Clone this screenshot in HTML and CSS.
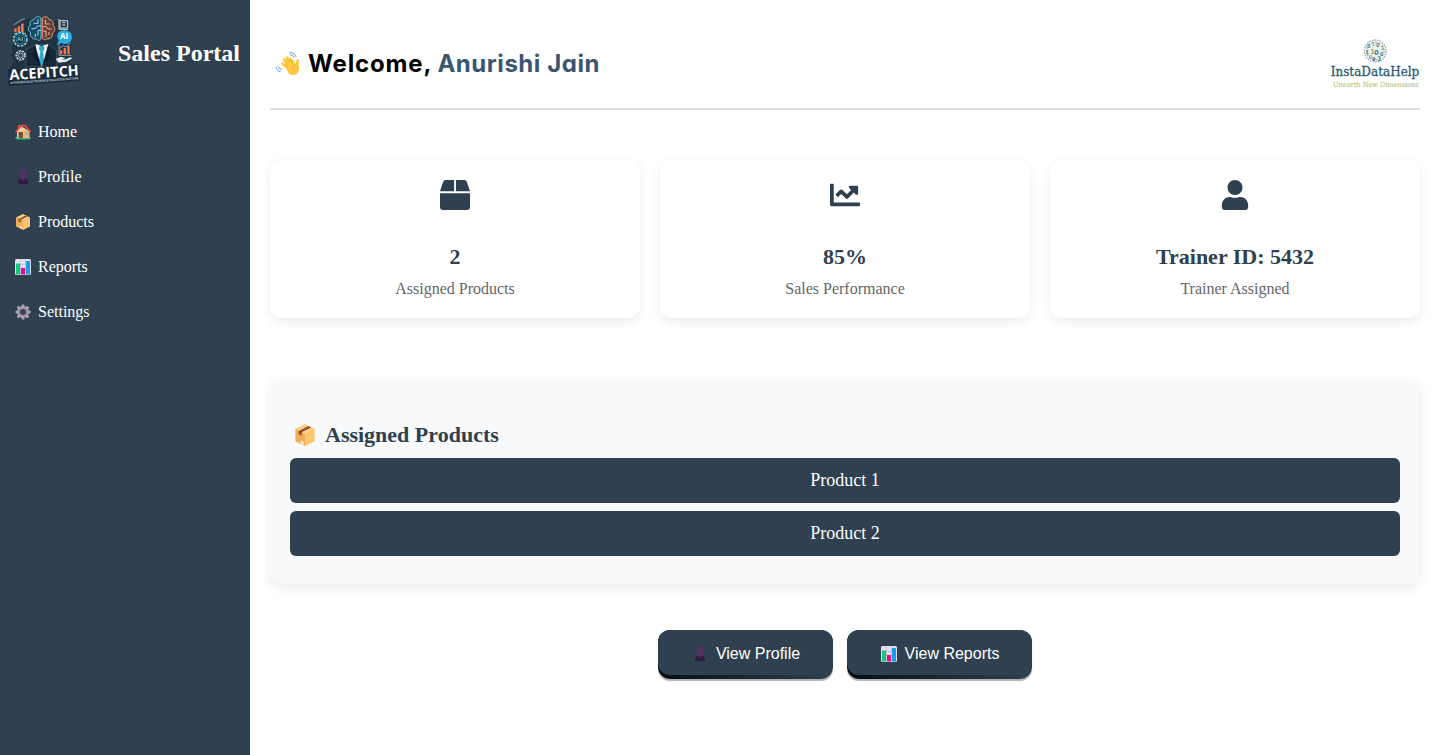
FILE: index.html
```html
<!DOCTYPE html>
<html lang="en">
<head>
<meta charset="utf-8">
<title>Sales Portal</title>
<link rel="stylesheet" href="styles.css">
</head>
<body>
<svg class="sprite" width="0" height="0" aria-hidden="true">
  <symbol id="house" viewBox="0 0 32 32">
    <path fill="#2fb879" d="M1 26h30q1 5-2 5H3q-3 0-2-5z"/>
    <path fill="#e54b35" d="M6 2h5v10H6z"/>
    <path fill="#f3d0a2" d="M4 15 13 5l15 9v14H4z"/>
    <path fill="#f0b477" d="M17 14h12v14H17z"/>
    <path fill="#824b35" d="M7 16h9v12H7z"/>
    <path fill="#9cb9ae" d="M20 17h6v6h-6z"/>
    <path fill="none" stroke="#ef4b3e" stroke-width="3.500" stroke-linecap="round" stroke-linejoin="round" d="M2 15 13 3h7l10 12"/>
  </symbol>
  <symbol id="bust" viewBox="0 0 32 32">
    <path fill="#321a40" d="M6 30v-4q0-6 6-7h8q6 1 6 7v4z"/>
    <path fill="#533163" d="M9 8q0-7 7-7t7 7v6q0 4-4 6l-3 4-3-4q-4-2-4-6z"/>
  </symbol>
  <symbol id="box" viewBox="0 0 32 32">
    <path fill="#ffcf82" d="M16 0 30 7 16 14 2 7z"/>
    <path fill="#f1ad56" d="M2 7 16 14v18L2 25z"/>
    <path fill="#ffc56f" d="M30 7 16 14v18l14-7z"/>
    <path fill="#8b5136" d="m7 10 14-7 4 2-14 7v5l-4-2z"/>
    <path fill="#fff0dc" d="m10 24 4 2v4l-4-2z"/>
  </symbol>
  <symbol id="chart" viewBox="0 0 32 32">
    <rect width="32" height="32" rx="3" fill="#e6dff0"/>
    <path stroke="#c2b5d4" stroke-width="1.5" d="M1 11h30M1 21h30M11 1v30M21 1v30"/>
    <path fill="#14c879" d="M2 9h8v22H2z"/>
    <path fill="#e80a8b" d="M12 18h8v13h-8z"/>
    <path fill="#149fe7" d="M22 4h8v27h-8z"/>
  </symbol>
  <symbol id="gear" viewBox="0 0 32 32">
    <g stroke="#aaa0b5" stroke-width="7" stroke-linecap="round">
      <path d="M16 4v24M4 16h24M7.500 7.500l17 17M7.500 24.500l17-17"/>
    </g>
    <circle cx="16" cy="16" r="11" fill="#aaa0b5"/>
    <circle cx="16" cy="16" r="7.500" fill="#766c80"/>
    <circle cx="16" cy="16" r="5" fill="#2f4050"/>
  </symbol>
  <symbol id="wave" viewBox="0 0 75 75">
    <g fill="none" stroke="#ffc83d" stroke-linecap="round">
      <path stroke-width="8" d="m31 46-8-8M38 39 27 25M47 36 36 20M56 36 47 24"/>
      <path stroke-width="8" d="m65 45 3-16"/>
    </g>
    <path fill="#ffc83d" d="m27 42 27-14 8 12 10 2q1 12-2 20c-5 13-22 13-29 4z"/>
    <path fill="none" stroke="#eda221" stroke-width="2" d="m33 40-6-10m14 6-7-12m16 9-7-10M53 55q0-9 9-14"/>
    <g fill="none" stroke="#4d8ad0" stroke-width="2.500" stroke-linecap="round">
      <path d="M46 11q8-1 11 8M44 5q14-2 19 12M10 47q2 9 10 8M3 48q2 13 13 14"/>
    </g>
  </symbol>
</svg>

<div class="app">
  <aside class="sidebar">
    <header class="brand">
      <svg class="brand-logo" viewBox="0 0 270 240" role="img" aria-label="AcePitch">
        <path class="halo" d="M44 53 76 30l22-3 20-5 28 4 16 9 44-7 2 34 5 42-4 55 23 8 2 42-208 18 2-44 10-20 6-9-8-17z"/>
        <g fill="#ef7646"><path d="m43 55 7-1v12h-7zm10-6 7-1v18h-7zm10-7 8-2v26h-8z"/></g>
        <path fill="none" stroke="#c0cdd7" stroke-width="2" d="m42 44 21-14 11-4M42 70h36"/>
        <g fill="none" stroke-width="3" transform="translate(0 4)">
          <path stroke="#70bedb" fill="#174a65" d="M123 20c-10-8-19-2-21 5-10 0-14 8-11 16-8 7-8 17 0 22-1 14 8 22 18 20 6 7 14 4 14-2z"/>
          <path stroke="#ee9873" fill="#613f3d" d="M127 20c10-8 20-1 21 6 10 0 14 9 11 16 8 7 7 17-1 23 0 14-9 19-17 17-6 6-14 3-14-3z"/>
          <path stroke="#a4dff0" d="M114 24v12h-13m22 8h-11l-6 8H94m29 5h-9v16m-8-6v10"/>
          <path stroke="#ffb18a" d="M136 25v13h13m-21 8h12l4 7h12m-28 6h10v18m9-15v9"/>
        </g>
        <g fill="none" stroke="#d7e1e7" stroke-width="3"><path d="M180 32h23v22h-23zM186 38h11m-11 7h11M177 27v31h28"/></g>
        <circle cx="61" cy="88" r="20" fill="#213d50" stroke="#8bcbe2" stroke-width="5" stroke-dasharray="8 3"/>
        <circle cx="61" cy="88" r="13" fill="#182c3d" stroke="#3faed2" stroke-width="2"/>
        <text x="52" y="94" class="badge-small">AI</text>
        <circle cx="62" cy="136" r="13" fill="none" stroke="#c7d4db" stroke-width="6" stroke-dasharray="6 3"/>
        <circle cx="62" cy="136" r="7" fill="#294154" stroke="#a6bac6" stroke-width="3"/>
        <path fill="#28ace2" d="M176 66q17-10 34 0 12 14 1 30-14 11-27 3l-14 7 6-14q-9-14 0-26z"/>
        <text x="180" y="86" class="badge">AI</text>
        <path fill="#16283a" stroke="#456073" stroke-width="2" d="m79 117 27-12 18-2 22 2 24 15v50H77z"/>
        <path fill="#ecf4f6" d="m106 102 19 6 20-6-6 34-14 34-16-34z"/>
        <path fill="#35a8ce" d="M119 108h12l3 8-5 8 4 32-8 14-9-14 5-32-5-8z"/>
        <path fill="#0d1c2b" d="m105 103 18 65-27-34 7-5zm40 0-18 65 27-34-7-5z"/>
        <g fill="#ef754b"><path d="M180 121h7v12h-7zm11-7h7v19h-7zm11-6h7v25h-7z"/></g>
        <path fill="none" stroke="#cbd7de" stroke-width="2" d="M177 104v32h37M180 115l10-8 7 4 15-12"/>
        <path fill="#e6edf0" d="m167 147 14-6 15 2-9 6 10-1 14-6 6 3-18 10-23 3z"/>
        <g transform="rotate(-4 133 200)">
          <path fill="#1b2c3b" d="M26 170h213v50H26z"/>
          <text x="29" y="203" textLength="208" lengthAdjust="spacingAndGlyphs" class="brand-name">ACEPITCH</text>
          <text x="30" y="215" textLength="205" lengthAdjust="spacingAndGlyphs" class="brand-tag">AI POWERED SALES TRAINING &amp; EVALUATION PLATFORM</text>
        </g>
      </svg>
      <h2 class="brand-title">Sales Portal</h2>
    </header>
    <nav class="menu">
      <a class="menu-item"><svg><use href="#house"/></svg>Home</a>
      <a class="menu-item"><svg><use href="#bust"/></svg>Profile</a>
      <a class="menu-item"><svg><use href="#box"/></svg>Products</a>
      <a class="menu-item"><svg><use href="#chart"/></svg>Reports</a>
      <a class="menu-item"><svg><use href="#gear"/></svg>Settings</a>
    </nav>
  </aside>

  <main class="content">
    <header class="topbar">
      <h1 class="welcome"><svg><use href="#wave"/></svg><span class="greeting">Welcome,</span><span class="user">Anurishi Jain</span></h1>
      <svg class="company" viewBox="0 0 330 195" role="img" aria-label="InstaDataHelp">
        <circle cx="166" cy="63" r="34" fill="#edf3f5"/>
        <circle cx="166" cy="63" r="33" fill="none" stroke="#8fa7b7" stroke-width="4" stroke-dasharray="4 4"/>
        <circle cx="166" cy="63" r="26" fill="none" stroke="#a3b994" stroke-width="4" stroke-dasharray="6 5"/>
        <g class="digits">
          <text x="142" y="54" fill="#587992">0</text><text x="155" y="48" fill="#8ba550">1</text><text x="169" y="51" fill="#47758f">0</text><text x="183" y="61" fill="#90a652">1</text>
          <text x="137" y="73" fill="#536d85">1</text><text x="180" y="79" fill="#426f95">0</text><text x="147" y="87" fill="#8098a4">0</text>
          <text x="151" y="73" class="big" fill="#8faf3c">1</text><text x="163" y="74" class="big" fill="#356d8f">0</text><text x="171" y="93" class="big" fill="#3d99cb">1</text><text x="157" y="94" fill="#315b86">9</text>
        </g>
        <text x="32" y="138" textLength="266" lengthAdjust="spacingAndGlyphs" class="company-name">InstaDataHelp</text>
        <text x="39" y="170" textLength="257" lengthAdjust="spacingAndGlyphs" class="company-tag">Unearth New Dimensions</text>
      </svg>
    </header>

    <section class="stats">
      <article class="stat">
        <svg class="stat-icon" viewBox="0 0 512 512"><path d="M509.500 184.600L458.900 32.800C452.400 13.200 434.100 0 413.400 0H272v192h238.700c-.4-2.500-.4-5-1.200-7.400zM240 0H98.600c-20.700 0-39 13.200-45.500 32.800L2.500 184.600c-.8 2.400-.8 4.900-1.200 7.400H240V0zM0 224v240c0 26.500 21.500 48 48 48h416c26.500 0 48-21.500 48-48V224H0z"/></svg>
        <h3>2</h3><p>Assigned Products</p>
      </article>
      <article class="stat">
        <svg class="stat-icon" viewBox="0 0 512 512"><path d="M496 384H64V80c0-8.840-7.160-16-16-16H16C7.160 64 0 71.160 0 80v336c0 17.670 14.330 32 32 32h464c8.840 0 16-7.160 16-16v-32c0-8.840-7.160-16-16-16zM464 96H345.940c-21.380 0-32.090 25.850-16.970 40.970l32.400 32.400L288 242.750l-73.370-73.370c-12.500-12.500-32.760-12.500-45.250 0l-68.690 68.690c-6.250 6.250-6.250 16.380 0 22.630l22.620 22.620c6.250 6.250 16.380 6.250 22.630 0L192 237.250l73.370 73.370c12.500 12.500 32.760 12.500 45.250 0l96-96 32.400 32.400c15.120 15.120 40.970 4.410 40.970-16.970V112c.01-8.840-7.150-16-15.990-16z"/></svg>
        <h3>85%</h3><p>Sales Performance</p>
      </article>
      <article class="stat">
        <svg class="stat-icon" viewBox="-32 0 512 512"><path d="M224 256c70.700 0 128-57.300 128-128S294.700 0 224 0 96 57.300 96 128s57.300 128 128 128zm89.600 32h-16.700c-22.200 10.200-46.900 16-72.900 16s-50.600-5.800-72.900-16h-16.700C60.200 288 0 348.200 0 422.400V464c0 26.500 21.500 48 48 48h352c26.500 0 48-21.500 48-48v-41.600c0-74.200-60.200-134.400-134.400-134.400z"/></svg>
        <h3>Trainer ID: 5432</h3><p>Trainer Assigned</p>
      </article>
    </section>

    <section class="products">
      <h2 class="products-title"><svg><use href="#box"/></svg>Assigned Products</h2>
      <ul class="product-list">
        <li>Product 1</li>
        <li>Product 2</li>
      </ul>
    </section>

    <div class="actions">
      <button class="action action-profile"><span class="face"><svg><use href="#bust"/></svg>View Profile</span></button>
      <button class="action action-reports"><span class="face"><svg><use href="#chart"/></svg>View Reports</span></button>
    </div>
  </main>
</div>
</body>
</html>
```
FILE: styles.css
```css
* { box-sizing: border-box; }
body { margin: 0; background: #fff; font-family: "Liberation Serif", "Times New Roman", serif; }
h1, h2, h3, p, ul { margin: 0; padding: 0; }
.sprite { display: block; }
.app { display: flex; height: 755px; overflow: hidden; }

.sidebar { width: 250px; flex: none; background: #2f4050; color: #fff; }
.brand { display: flex; justify-content: space-between; height: 110px; padding: 10px 10px 0 0; }
.brand-logo { width: 90px; height: 80px; overflow: visible; }
.halo { fill: #213342; stroke: #213342; stroke-width: 3px; stroke-linejoin: round; }
.brand-name { font: 700 43px "Open Sans", sans-serif; fill: #fff; }
.brand-tag { font: 700 9px "Open Sans", sans-serif; fill: #bfcbd3; }
.badge { font: 700 24px "Open Sans", sans-serif; fill: #fff; }
.badge-small { font: 700 17px "Open Sans", sans-serif; fill: #69cce9; }
.brand-title { margin-top: 30px; font-size: 24px; line-height: 27px; white-space: nowrap; }
.menu { display: flex; flex-direction: column; margin-top: -1px; }
.menu-item { display: flex; align-items: center; gap: 7px; height: 45px; padding-left: 15px; font-size: 16px; }
.menu-item svg { width: 16px; height: 16px; }

.content { flex: 1; padding: 0 15px 0 20px; }
.topbar { display: flex; justify-content: space-between; align-items: flex-start; height: 110px; padding-top: 30px; border-bottom: 2px solid #ddd; }
.welcome { display: flex; align-items: center; height: 66px; padding-left: 5px; font: 700 24px Inter, "Open Sans", sans-serif; font-feature-settings: "cv11"; white-space: nowrap; }
.welcome svg { width: 25px; height: 25px; margin-right: 8px; }
.greeting { margin-right: 5px; color: #000; letter-spacing: .85px; }
.user { color: #3b566e; letter-spacing: .55px; }
.company { width: 110px; height: 65px; margin-right: -10px; }
.digits { font: 700 17px "Liberation Sans", sans-serif; }
.digits .big { font-size: 24px; }
.company-name { font: 38px "DejaVu Serif", serif; fill: #285773; stroke: #285773; stroke-width: .8px; }
.company-tag { font: 21px "DejaVu Serif", serif; fill: #bcc476; stroke: #bcc476; stroke-width: .4px; }

.stats { display: grid; grid-template-columns: repeat(3, 1fr); gap: 20px; margin-top: 50px; }
.stat { display: flex; flex-direction: column; align-items: center; height: 158px; padding-top: 20px; border-radius: 12px; background: #fff; box-shadow: 0 4px 12px rgba(0, 0, 0, .08); }
.stat-icon { width: 30px; height: 30px; fill: #2f4050; }
.stat h3 { margin-top: 34px; font-size: 22px; line-height: 25px; color: #2f4050; }
.stat p { margin-top: 11px; font-size: 16px; line-height: 18px; color: #666; }

.products { height: 206px; margin-top: 60px; padding: 42px 20px 0; border-radius: 12px; background: #f8f9fb; box-shadow: 0 4px 12px rgba(0, 0, 0, .08); }
.products-title { display: flex; align-items: center; gap: 9px; height: 30px; padding-left: 4px; font-size: 22px; color: #2f4050; }
.products-title svg { width: 22px; height: 22px; }
.product-list { display: grid; gap: 8px; margin-top: 8px; list-style: none; }
.product-list li { height: 45px; border-radius: 6px; background: #2f4050; color: #fff; font-size: 18px; line-height: 45px; text-align: center; }

.actions { display: flex; justify-content: center; gap: 14px; margin-top: 46px; }
.action { height: 49px; padding: 0 0 4px; border: 0; border-radius: 12px; background: linear-gradient(90deg, #080d13, #2f4050); box-shadow: 0 2px 1px rgba(0, 0, 0, .3); font: 16px "Liberation Sans", Arial, sans-serif; color: #fff; }
.action-profile { width: 175px; }
.action-reports { width: 185px; }
.face { display: flex; align-items: center; justify-content: center; gap: 8px; height: 45px; padding: 2px 0 0 1px; border-radius: 12px; background: #2f4050; }
.face svg { width: 16px; height: 16px; }
```
